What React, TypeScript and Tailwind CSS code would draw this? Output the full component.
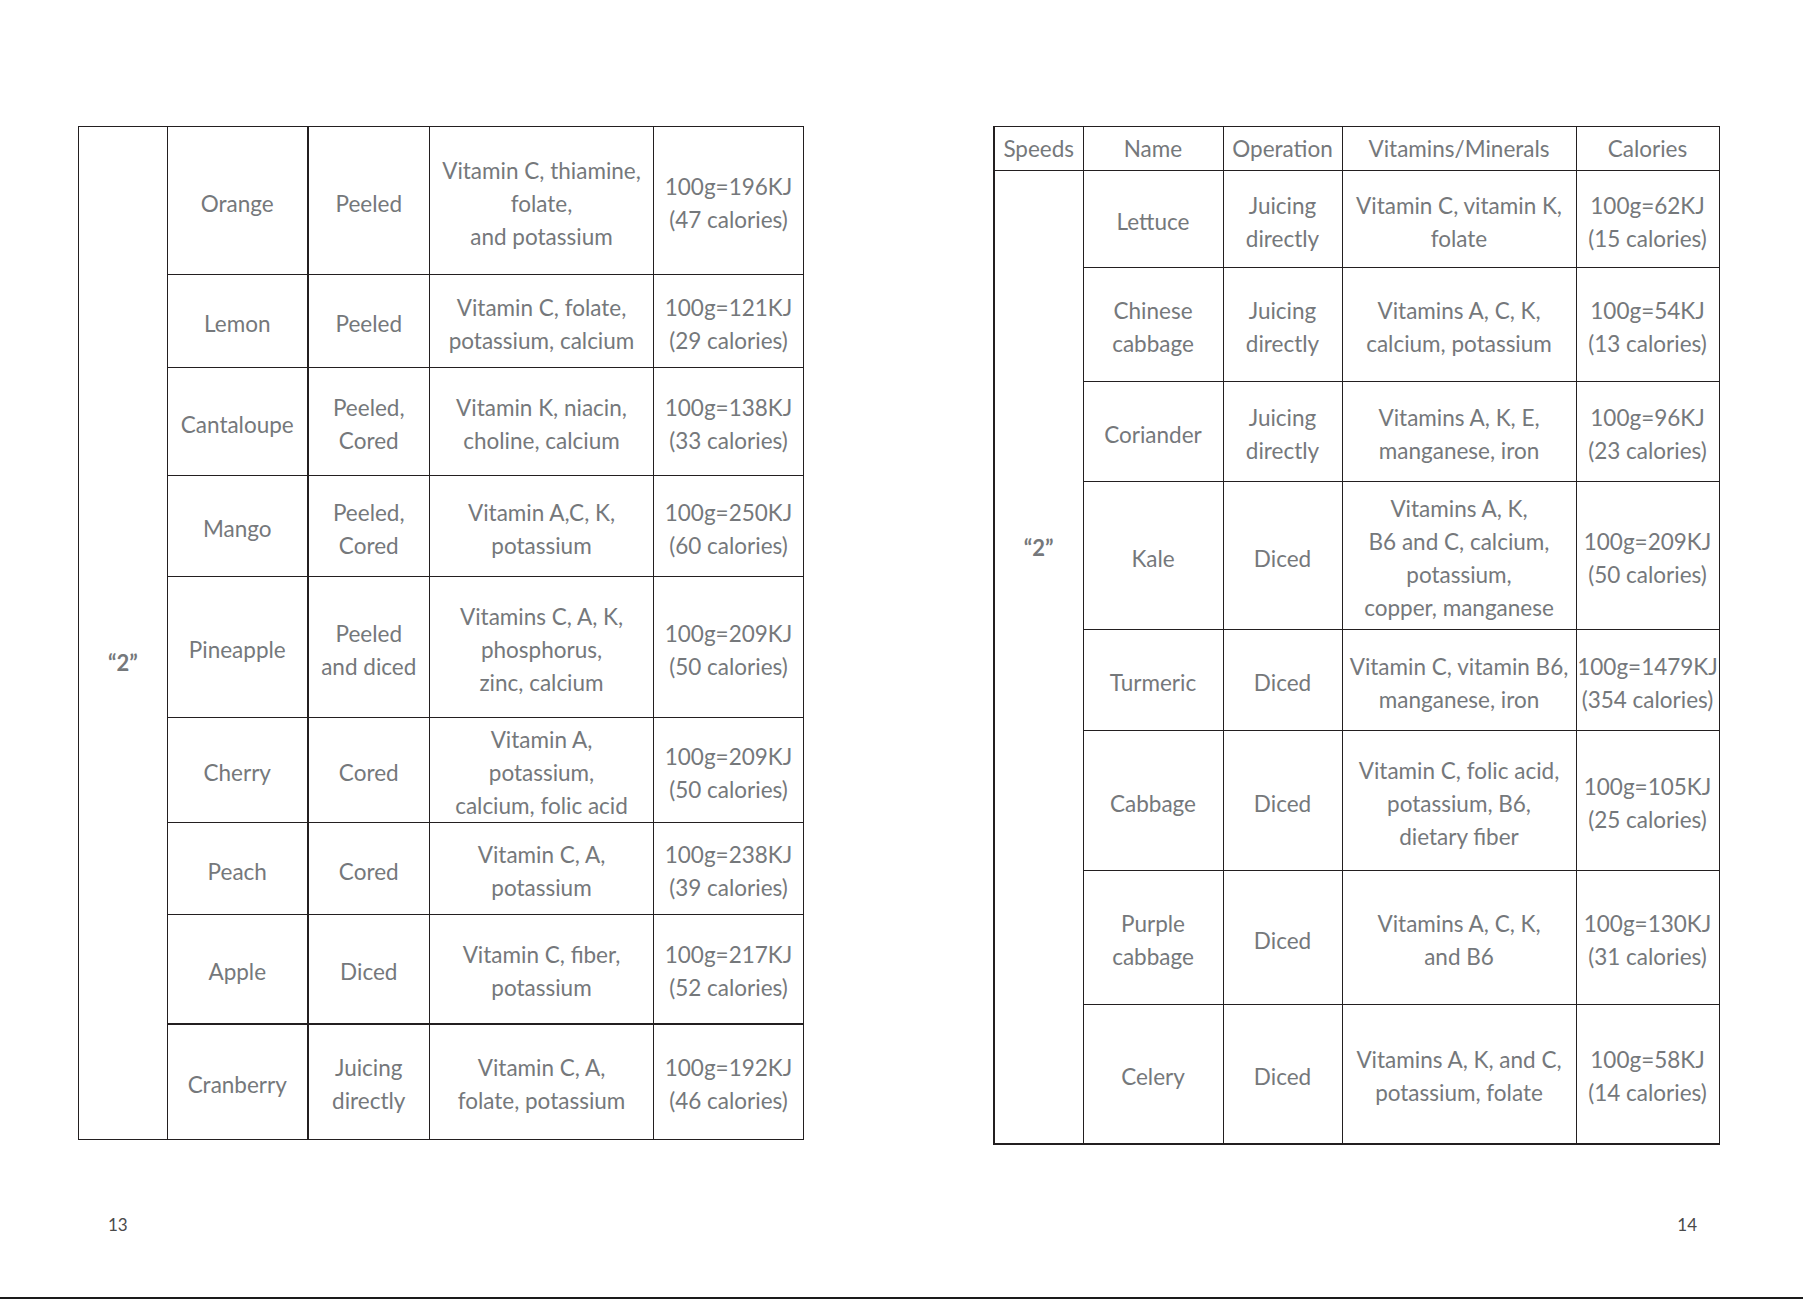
import React from "react";

type Row = { name: string[]; op: string[]; vit: string[]; cal: string[]; h: number; thickTop?: boolean };

const leftRows: Row[] = [
  { name: ["Orange"], op: ["Peeled"], vit: ["Vitamin C, thiamine,", "folate,", "and potassium"], cal: ["100g=196KJ", "(47 calories)"], h: 148 },
  { name: ["Lemon"], op: ["Peeled"], vit: ["Vitamin C, folate,", "potassium, calcium"], cal: ["100g=121KJ", "(29 calories)"], h: 93 },
  { name: ["Cantaloupe"], op: ["Peeled,", "Cored"], vit: ["Vitamin K, niacin,", "choline, calcium"], cal: ["100g=138KJ", "(33 calories)"], h: 108 },
  { name: ["Mango"], op: ["Peeled,", "Cored"], vit: ["Vitamin A,C, K,", "potassium"], cal: ["100g=250KJ", "(60 calories)"], h: 101 },
  { name: ["Pineapple"], op: ["Peeled", "and diced"], vit: ["Vitamins C, A, K,", "phosphorus,", "zinc, calcium"], cal: ["100g=209KJ", "(50 calories)"], h: 141 },
  { name: ["Cherry"], op: ["Cored"], vit: ["Vitamin A,", "potassium,", "calcium, folic acid"], cal: ["100g=209KJ", "(50 calories)"], h: 104 },
  { name: ["Peach"], op: ["Cored"], vit: ["Vitamin C, A,", "potassium"], cal: ["100g=238KJ", "(39 calories)"], h: 92 },
  { name: ["Apple"], op: ["Diced"], vit: ["Vitamin C, fiber,", "potassium"], cal: ["100g=217KJ", "(52 calories)"], h: 109 },
  { name: ["Cranberry"], op: ["Juicing", "directly"], vit: ["Vitamin C, A,", "folate, potassium"], cal: ["100g=192KJ", "(46 calories)"], h: 116, thickTop: true },
];

const rightRows: Row[] = [
  { name: ["Lettuce"], op: ["Juicing", "directly"], vit: ["Vitamin C, vitamin K,", "folate"], cal: ["100g=62KJ", "(15 calories)"], h: 97 },
  { name: ["Chinese", "cabbage"], op: ["Juicing", "directly"], vit: ["Vitamins A, C, K,", "calcium, potassium"], cal: ["100g=54KJ", "(13 calories)"], h: 114 },
  { name: ["Coriander"], op: ["Juicing", "directly"], vit: ["Vitamins A, K, E,", "manganese, iron"], cal: ["100g=96KJ", "(23 calories)"], h: 100 },
  { name: ["Kale"], op: ["Diced"], vit: ["Vitamins A, K,", "B6 and C, calcium,", "potassium,", "copper, manganese"], cal: ["100g=209KJ", "(50 calories)"], h: 148 },
  { name: ["Turmeric"], op: ["Diced"], vit: ["Vitamin C, vitamin B6,", "manganese, iron"], cal: ["100g=1479KJ", "(354 calories)"], h: 101 },
  { name: ["Cabbage"], op: ["Diced"], vit: ["Vitamin C, folic acid,", "potassium, B6,", "dietary fiber"], cal: ["100g=105KJ", "(25 calories)"], h: 140 },
  { name: ["Purple", "cabbage"], op: ["Diced"], vit: ["Vitamins A, C, K,", "and B6"], cal: ["100g=130KJ", "(31 calories)"], h: 134 },
  { name: ["Celery"], op: ["Diced"], vit: ["Vitamins A, K, and C,", "potassium, folate"], cal: ["100g=58KJ", "(14 calories)"], h: 139 },
];

const Lines = ({ lines, pad = true }: { lines: string[]; pad?: boolean }) => (
  <div className={pad ? "pt-[5px]" : ""}>
    {lines.map((l, i) => (
      <div key={i} className="whitespace-nowrap">
        {l}
      </div>
    ))}
  </div>
);

const font = { fontFamily: "Lato, 'Liberation Sans', sans-serif" };

export default function App() {
  return (
    <div
      className="relative w-[1803px] h-[1299px] bg-white border-b-2 border-[#1a1a1a] text-[#75787b] flex flex-col"
      style={font}
    >
      <div className="flex items-start pt-[126px] pl-[78px] gap-[189px]">
        {/* Left table */}
        <table className="table-fixed border-collapse w-[725px] text-[22.5px] leading-[33px] text-center">
          <colgroup>
            <col className="w-[89px]" />
            <col className="w-[140px]" />
            <col className="w-[122px]" />
            <col className="w-[224px]" />
            <col className="w-[150px]" />
          </colgroup>
          <tbody>
            {leftRows.map((r, i) => (
              <tr key={i} style={{ height: r.h }}>
                {i === 0 && (
                  <td
                    rowSpan={leftRows.length}
                    className="border border-[#231f20] align-middle pt-[58px] font-bold text-[22px]"
                  >
                    “2”
                  </td>
                )}
                <td className={`border border-[#231f20] border-r-2 ${r.thickTop ? "border-t-2" : ""}`}>
                  <Lines lines={r.name} />
                </td>
                <td className={`border border-[#231f20] ${r.thickTop ? "border-t-2" : ""}`}>
                  <Lines lines={r.op} />
                </td>
                <td className={`border border-[#231f20] ${r.thickTop ? "border-t-2" : ""}`}>
                  <Lines lines={r.vit} />
                </td>
                <td className={`border border-[#231f20] ${r.thickTop ? "border-t-2" : ""}`}>
                  <Lines lines={r.cal} />
                </td>
              </tr>
            ))}
          </tbody>
        </table>

        {/* Right table */}
        <table className="table-fixed border-collapse w-[725px] text-[22.5px] leading-[33px] text-center">
          <colgroup>
            <col className="w-[89px]" />
            <col className="w-[140px]" />
            <col className="w-[119px]" />
            <col className="w-[234px]" />
            <col className="w-[143px]" />
          </colgroup>
          <tbody>
            <tr className="h-[44px]">
              <td className="border border-[#231f20] border-l-2"><Lines lines={["Speeds"]} pad={false} /></td>
              <td className="border border-[#231f20]"><Lines lines={["Name"]} pad={false} /></td>
              <td className="border border-[#231f20]"><Lines lines={["Operation"]} pad={false} /></td>
              <td className="border border-[#231f20]"><Lines lines={["Vitamins/Minerals"]} pad={false} /></td>
              <td className="border border-[#231f20]"><Lines lines={["Calories"]} pad={false} /></td>
            </tr>
            {rightRows.map((r, i) => (
              <tr key={i} style={{ height: r.h }}>
                {i === 0 && (
                  <td
                    rowSpan={rightRows.length}
                    className="border border-[#231f20] border-l-2 border-b-2 align-middle pb-[218px] font-bold text-[22px]"
                  >
                    “2”
                  </td>
                )}
                <td className={`border border-[#231f20] ${i === rightRows.length - 1 ? "border-b-2" : ""}`}>
                  <Lines lines={r.name} />
                </td>
                <td className={`border border-[#231f20] ${i === rightRows.length - 1 ? "border-b-2" : ""}`}>
                  <Lines lines={r.op} />
                </td>
                <td className={`border border-[#231f20] ${i === rightRows.length - 1 ? "border-b-2" : ""}`}>
                  <Lines lines={r.vit} />
                </td>
                <td className={`border border-[#231f20] ${i === rightRows.length - 1 ? "border-b-2" : ""}`}>
                  <Lines lines={r.cal} />
                </td>
              </tr>
            ))}
          </tbody>
        </table>
      </div>

      <div className="flex justify-between pl-[108px] pr-[106px] mt-auto mb-[62px] text-[17px] leading-[20px] text-[#4a4a4a]">
        <span>13</span>
        <span>14</span>
      </div>
    </div>
  );
}
